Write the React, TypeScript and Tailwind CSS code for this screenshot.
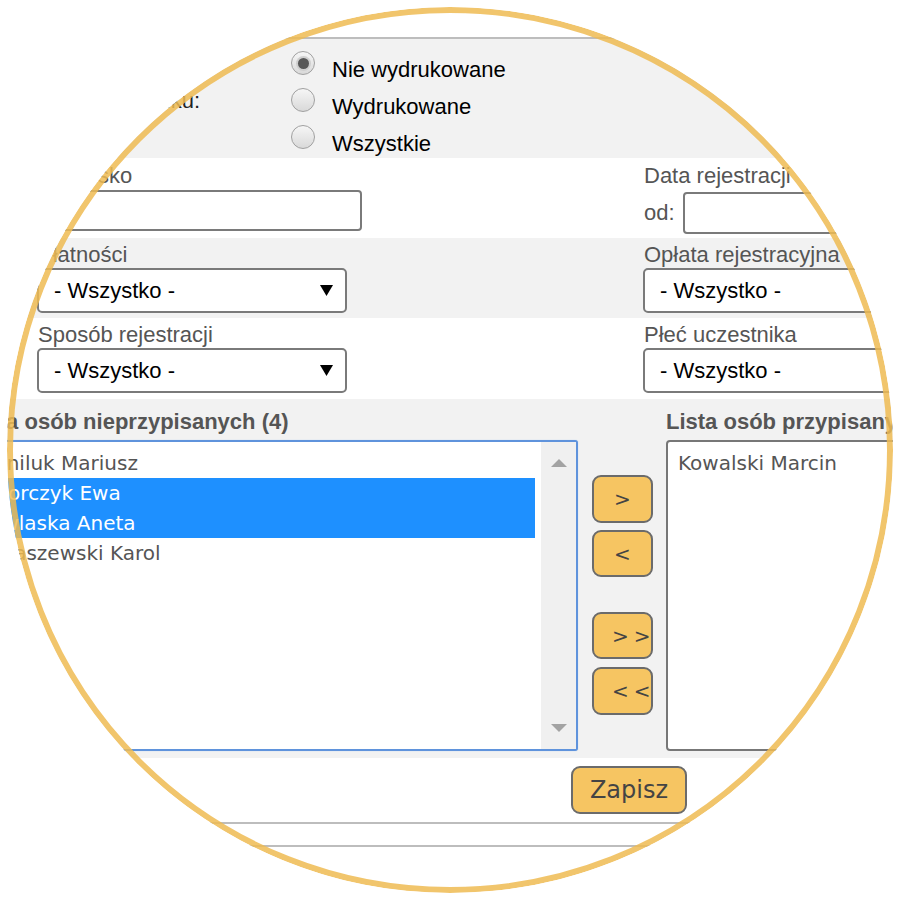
import React from "react";

const ARIAL = { fontFamily: '"Liberation Sans", Arial, sans-serif' } as const;

function Radio({ checked }: { checked?: boolean }) {
  return (
    <span className="w-[24px] h-[24px] rounded-full border border-[#a0a0a0] bg-[linear-gradient(180deg,#f6f6f6,#d9d9d9)] flex items-center justify-center shrink-0">
      {checked && (
        <span className="w-[11px] h-[11px] rounded-full bg-[#575757] shadow-[0_0_0_2px_#cfcfcf]" />
      )}
    </span>
  );
}

function Select({ w }: { w: string }) {
  return (
    <div
      className={`${w} shrink-0 h-[45px] border-2 border-[#7a7a7a] rounded-[5px] bg-white flex items-center justify-between pl-[15px] pr-[12px]`}
    >
      <span className="text-[22px] text-black leading-none">- Wszystko -</span>
      <svg width="13" height="11" viewBox="0 0 13 11">
        <polygon points="0,0 13,0 6.5,11" fill="#000" />
      </svg>
    </div>
  );
}

function ArrowBtn({ label, spaced, h }: { label: string; spaced?: boolean; h: string }) {
  return (
    <div
      className={`w-[61px] ${h} shrink-0 rounded-[9px] border-2 border-[#6b6b6b] bg-[#f6c562] flex items-center ${
        spaced ? "justify-start pl-[18px] tracking-[5px]" : "justify-center"
      } text-[20px] text-[#444]`}
      style={{ fontFamily: '"DejaVu Sans", sans-serif' }}
    >
      {label}
    </div>
  );
}

export default function App() {
  const left = ["Daniluk Mariusz", "Sikorczyk Ewa", "Pawlaska Aneta", "Łukaszewski Karol"];
  const selected = [false, true, true, false];
  return (
    <div className="w-[900px] h-[900px] bg-white flex items-center justify-center" style={ARIAL}>
      <div className="relative w-[886px] h-[886px] shrink-0 rounded-full overflow-hidden bg-white">
        <div className="-ml-[50px] w-[1300px]">
          <div className="h-[30px]" />
          <div className="h-[2px] bg-[#bdbdbd]" />
          {/* Row 1 radio */}
          <div className="h-[119px] bg-[#f2f2f2] flex">
            <div className="w-[243px] shrink-0 text-right pt-[50px] text-[22px] leading-[24px] text-[#222]">
              Status wydruku:
            </div>
            <div className="ml-[91px] pt-[12px] flex flex-col">
              {[
                ["Nie wydrukowane", true],
                ["Wydrukowane", false],
                ["Wszystkie", false],
              ].map(([t, c]) => (
                <div key={t as string} className="h-[37px] flex items-start">
                  <Radio checked={c as boolean} />
                  <span className="ml-[17px] text-[22px] leading-[37px] text-black whitespace-nowrap">
                    {t as string}
                  </span>
                </div>
              ))}
            </div>
          </div>
          {/* Row 2 */}
          <div className="h-[80px] bg-white flex pl-[80px] pt-[6px] text-[22px] text-[#555]">
            <div className="w-[606px] shrink-0 flex flex-col">
              <div className="leading-[24px] pl-[1px]">Nazwisko</div>
              <div className="mt-[2px] w-[325px] h-[41px] border-2 border-[#7a7a7a] rounded-[4px] bg-white" />
            </div>
            <div className="flex flex-col shrink-0">
              <div className="leading-[24px] pl-[1px] whitespace-nowrap">Data rejestracji</div>
              <div className="mt-[4px] flex items-center">
                <span className="pl-[1px] leading-[24px]">od:</span>
                <div className="ml-[8px] w-[300px] shrink-0 h-[42px] border-2 border-[#7a7a7a] rounded-[4px] bg-white" />
              </div>
            </div>
          </div>
          {/* Row 3 */}
          <div className="h-[80px] bg-[#f2f2f2] flex pl-[80px] pt-[5px] text-[22px] text-[#555]">
            <div className="w-[606px] shrink-0 flex flex-col">
              <div className="leading-[24px] pl-[1px]">Płatności</div>
              <div className="mt-[1px]">
                <Select w="w-[310px]" />
              </div>
            </div>
            <div className="flex flex-col shrink-0">
              <div className="leading-[24px] pl-[1px] whitespace-nowrap">Opłata rejestracyjna</div>
              <div className="mt-[1px]">
                <Select w="w-[310px]" />
              </div>
            </div>
          </div>
          {/* Row 4 */}
          <div className="h-[81px] bg-white flex pl-[80px] pt-[5px] text-[22px] text-[#555]">
            <div className="w-[606px] shrink-0 flex flex-col">
              <div className="leading-[24px] pl-[1px]">Sposób rejestracji</div>
              <div className="mt-[1px]">
                <Select w="w-[310px]" />
              </div>
            </div>
            <div className="flex flex-col shrink-0">
              <div className="leading-[24px] pl-[1px] whitespace-nowrap">Płeć uczestnika</div>
              <div className="mt-[1px]">
                <Select w="w-[310px]" />
              </div>
            </div>
          </div>
          {/* Row 5 lists */}
          <div className="bg-[#f2f2f2] flex pl-[10px] pt-[11px] pb-[7px]">
            <div className="w-[611px] shrink-0 flex flex-col">
              <div className="leading-[24px] text-[22px] font-bold text-[#555] whitespace-nowrap">
                Lista osób nieprzypisanych (4)
              </div>
              <div className="mt-[6px] h-[311px] border-2 border-[#5f93dc] rounded-[3px] bg-white flex shadow-[0_0_1px_#9cc0ee]">
                <div className="flex-1 pt-[6px] pr-[6px]" style={{ fontFamily: '"DejaVu Sans", sans-serif' }}>
                  {left.map((n, i) => (
                    <div
                      key={n}
                      className={`h-[30px] leading-[30px] pl-[10px] text-[20px] whitespace-nowrap ${
                        selected[i] ? "bg-[#1e90ff] text-white" : "text-[#555]"
                      }`}
                    >
                      {n}
                    </div>
                  ))}
                </div>
                <div className="w-[35px] shrink-0 bg-[#f0f0f0] flex flex-col items-center justify-between py-[17px]">
                  <svg width="16" height="8" viewBox="0 0 16 8">
                    <polygon points="8,0 16,8 0,8" fill="#a3a3a3" />
                  </svg>
                  <svg width="16" height="8" viewBox="0 0 16 8">
                    <polygon points="0,0 16,0 8,8" fill="#a3a3a3" />
                  </svg>
                </div>
              </div>
            </div>
            <div className="ml-[14px] w-[61px] shrink-0 pt-[65px] flex flex-col">
              <ArrowBtn label=">" h="h-[48px]" />
              <div className="h-[7px]" />
              <ArrowBtn label="<" h="h-[47px]" />
              <div className="h-[35px]" />
              <ArrowBtn label=">>" spaced h="h-[47px]" />
              <div className="h-[8px]" />
              <ArrowBtn label="<<" spaced h="h-[48px]" />
            </div>
            <div className="ml-[13px] w-[300px] shrink-0 flex flex-col">
              <div className="leading-[24px] text-[22px] font-bold text-[#555] whitespace-nowrap">
                Lista osób przypisanych (1)
              </div>
              <div
                className="mt-[6px] h-[311px] border-2 border-[#777] rounded-[4px] bg-white pt-[6px]"
                style={{ fontFamily: '"DejaVu Sans", sans-serif' }}
              >
                <div className="h-[30px] leading-[30px] pl-[10px] text-[20px] text-[#555] whitespace-nowrap">
                  Kowalski Marcin
                </div>
              </div>
            </div>
          </div>
          {/* Save */}
          <div className="bg-white pt-[8px] pb-[8px] pl-[614px]">
            <div
              className="w-[116px] h-[48px] rounded-[9px] border-2 border-[#6b6b6b] bg-[#f6c562] flex items-center justify-center text-[24px] text-[#444]"
              style={{ fontFamily: '"DejaVu Sans", sans-serif' }}
            >
              Zapisz
            </div>
          </div>
          <div className="h-[2px] bg-[#bdbdbd]" />
          <div className="h-[21px] bg-white" />
          <div className="h-[2px] bg-[#bdbdbd]" />
        </div>
        <div className="absolute inset-0 rounded-full border-[6px] border-[rgba(239,187,82,0.85)] pointer-events-none" />
      </div>
    </div>
  );
}
